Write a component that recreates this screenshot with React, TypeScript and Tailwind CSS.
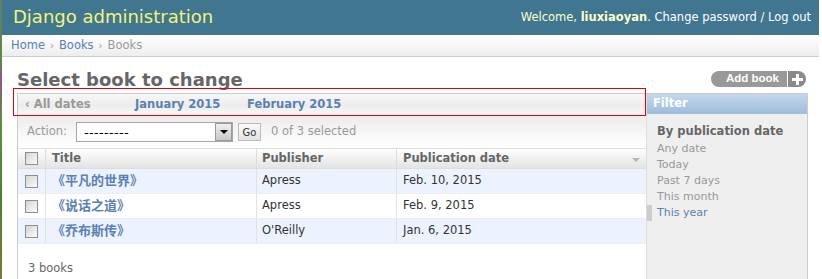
import React from "react";

const Checkbox = () => (
  <div className="w-[13px] h-[13px] border border-[#8e8e8e] bg-[linear-gradient(135deg,#d4d4d4,#fbfbfb)] shrink-0" />
);

const rows = [
  { t: "《平凡的世界》", p: "Apress", d: "Feb. 10, 2015", bg: "bg-[#edf3fe]" },
  { t: "《说话之道》", p: "Apress", d: "Feb. 9, 2015", bg: "bg-white" },
  { t: "《乔布斯传》", p: "O'Reilly", d: "Jan. 6, 2015", bg: "bg-[#edf3fe]" },
];

export default function App() {
  return (
    <div className="relative flex w-[822px] h-[279px] overflow-hidden bg-white font-['DejaVu_Sans','Noto_Sans_CJK_SC',sans-serif]">
      <div className="w-[2px] shrink-0 bg-[linear-gradient(to_bottom,#5f7f6a_0%,#5c8a4a_20%,#8a5a86_28%,#5f8f3f_45%,#4f7f2f_70%,#7a7a3a_100%)]" />
      <div className="w-[817px] shrink-0 flex flex-col">
        {/* header */}
        <div className="h-[35px] shrink-0 bg-[#417690] flex items-center justify-between pl-[11px] pr-[8px]">
          <span className="text-[18px] leading-[18px] text-[#f4f379] pb-[1px]">Django administration</span>
          <span className="text-[11.5px] text-[#ffc]">
            Welcome, <b>liuxiaoyan</b>. <span className="text-white">Change password</span> /{" "}
            <span className="text-white">Log out</span>
          </span>
        </div>
        {/* breadcrumbs */}
        <div className="h-[22px] shrink-0 border-b border-[#ccc] bg-[linear-gradient(to_bottom,#ffffff,#ededed)] pl-[9px] flex items-center text-[11.5px] text-[#999]">
          <span className="text-[#5b80b2]">Home</span>
          <span className="mx-[5px] text-[10px]">›</span>
          <span className="text-[#5b80b2]">Books</span>
          <span className="mx-[5px] text-[10px]">›</span>
          <span>Books</span>
        </div>
        {/* content */}
        <div className="flex-1 pl-[15px] pr-[11px] pt-[12px]">
          <div className="flex justify-between items-start h-[24px]">
            <h1 className="text-[18px] leading-[22px] font-bold text-[#666]">Select book to change</h1>
            <div className="mt-[2px] mr-[2px] flex h-[16px] font-['Liberation_Sans',sans-serif]">
              <div className="h-full rounded-l-[8px] bg-[#999] pl-[15px] pr-[8px] flex items-center text-white font-bold text-[11.5px]">
                Add book
              </div>
              <div className="w-[1px] bg-white" />
              <div className="w-[18px] h-full rounded-r-[8px] bg-[#8a8a8a] flex items-center justify-center">
                <svg width="11" height="11" viewBox="0 0 11 11">
                  <rect x="4" y="0" width="3" height="11" fill="white" />
                  <rect x="0" y="4" width="11" height="3" fill="white" />
                </svg>
              </div>
            </div>
          </div>
          {/* module */}
          <div className="border border-[#ccc] flex h-[220px]">
            <div className="w-[628px] shrink-0 flex flex-col bg-white">
              {/* date hierarchy */}
              <div className="h-[22px] shrink-0 border-b border-[#ddd] bg-[linear-gradient(to_bottom,#f7f7f7,#ececec_55%,#f9f9f9)] flex items-center pl-[7px] text-[11.5px] font-bold">
                <span className="w-[110px] text-[#999]">‹ All dates</span>
                <span className="w-[112px] text-[#5b80b2]">January 2015</span>
                <span className="text-[#5b80b2]">February 2015</span>
              </div>
              {/* actions */}
              <div className="h-[33px] shrink-0 border-b border-[#ddd] bg-[linear-gradient(to_bottom,#ececec,#ffffff)] flex items-center pl-[9px] text-[11.5px] text-[#999]">
                <span className="w-[49px]">Action:</span>
                <div className="w-[157px] h-[20px] border border-[#a5a5a5] bg-white flex items-center justify-between">
                  <span className="pl-[7px] text-[13px] text-black tracking-[0.3px] leading-none">---------</span>
                  <div className="w-[17px] h-[18px] border border-[#9a9a9a] bg-[linear-gradient(to_bottom,#f0f0f0,#c8c8c8)] flex items-center justify-center">
                    <div className="w-0 h-0 border-l-[4px] border-r-[4px] border-t-[4px] border-l-transparent border-r-transparent border-t-black" />
                  </div>
                </div>
                <div className="ml-[5px] w-[23px] h-[18px] border border-[#bbb] bg-[linear-gradient(to_bottom,#fafafa,#e2e2e2)] flex items-center justify-center text-[10px] text-[#333]">
                  Go
                </div>
                <span className="ml-[10px] text-[#999]">0 of 3 selected</span>
              </div>
              {/* table header */}
              <div className="h-[20px] shrink-0 flex border-b border-[#ddd] bg-[linear-gradient(to_bottom,#ffffff,#e3e3e3)] text-[11.5px] font-bold text-[#666]">
                <div className="w-[27px] shrink-0 flex items-center pl-[7px]">
                  <Checkbox />
                </div>
                <div className="w-[211px] shrink-0 border-l border-[#ddd] pl-[6px] flex items-center">Title</div>
                <div className="w-[140px] shrink-0 border-l border-[#ddd] pl-[5px] flex items-center">Publisher</div>
                <div className="flex-1 border-l border-[#ddd] pl-[6px] flex items-center relative">
                  Publication date
                  <div className="absolute right-[6px] top-[9px] w-0 h-0 border-l-[4px] border-r-[4px] border-t-[4px] border-l-transparent border-r-transparent border-t-[#b5b5b5]" />
                </div>
              </div>
              {/* rows */}
              {rows.map((r) => (
                <div key={r.t} className={`h-[25px] shrink-0 flex border-b border-[#eee] text-[11.5px] text-[#333] ${r.bg}`}>
                  <div className="w-[27px] shrink-0 flex items-center pl-[7px]">
                    <Checkbox />
                  </div>
                  <div className="w-[211px] shrink-0 border-l border-[#e2e2e2] pl-[6px] flex items-center text-[13px] font-bold text-[#5b80b2]">
                    {r.t}
                  </div>
                  <div className="w-[140px] shrink-0 border-l border-[#e2e2e2] pl-[5px] flex items-center">{r.p}</div>
                  <div className="flex-1 border-l border-[#e2e2e2] pl-[6px] flex items-center">{r.d}</div>
                </div>
              ))}
              <div className="pt-[13px] pl-[10px] text-[11.5px] leading-[22px] text-[#666]">3 books</div>
            </div>
            {/* filter */}
            <div className="w-[161px] shrink-0 border-l border-[#ddd] bg-[#efefef]">
              <div className="h-[20px] bg-[linear-gradient(to_bottom,#c4d7ec,#9ebcdc)] pl-[6px] flex items-center text-white font-bold text-[11.5px]">
                Filter
              </div>
              <h3 className="mt-[9px] pl-[10px] text-[11.5px] leading-[16px] font-bold text-[#666]">By publication date</h3>
              <ul className="mt-[2px] text-[11px] leading-[16px] text-[#999]">
                <li className="pl-[10px]">Any date</li>
                <li className="pl-[10px]">Today</li>
                <li className="pl-[10px]">Past 7 days</li>
                <li className="pl-[10px]">This month</li>
                <li className="border-l-[5px] border-[#ccc] pl-[5px] text-[#5b80b2]">This year</li>
              </ul>
            </div>
          </div>
        </div>
      </div>
      <div className="w-[3px] shrink-0 bg-white" />
      {/* red annotation box */}
      <div className="absolute left-[13px] top-[88px] w-[633px] h-[28px] border border-solid border-red-600" />
    </div>
  );
}
